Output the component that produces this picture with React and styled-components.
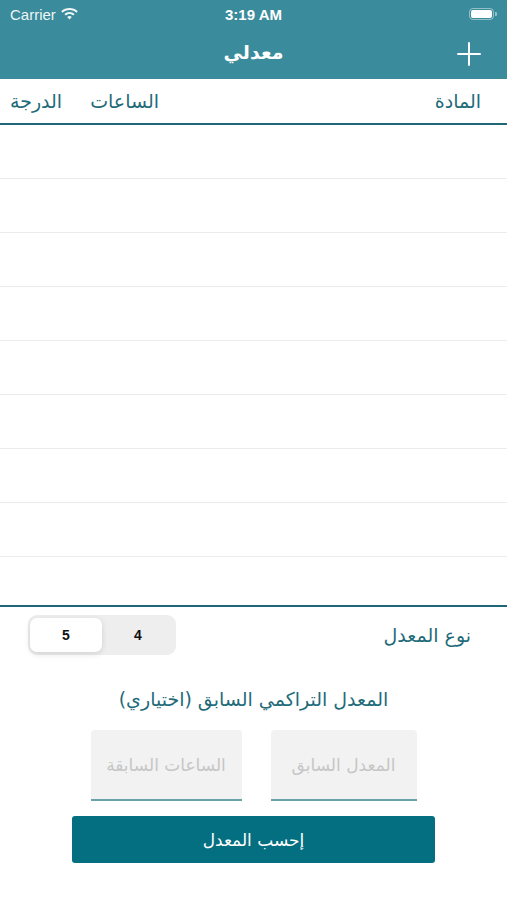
import React, { useState } from 'react';
import styled, { createGlobalStyle } from 'styled-components';

const GlobalStyle = createGlobalStyle`
  html, body {
    margin: 0;
    padding: 0;
    background: #fff;
  }
  body {
    font-family: "DejaVu Sans", "Noto Sans", sans-serif;
  }
  * { box-sizing: border-box; }
`

const Screen = styled.div`
  width: 507px;
  height: 900px;
  display: flex;
  flex-direction: column;
  background: #fff;
  overflow: hidden;
`

const TopBar = styled.div`
  background: #3a8b9b;
  color: #fff;
  display: flex;
  flex-direction: column;
`

const StatusBar = styled.div`
  height: 28px;
  display: grid;
  grid-template-columns: 1fr auto 1fr;
  align-items: center;
  padding: 0 10px;
  font-family: "Liberation Sans", "DejaVu Sans", sans-serif;
  font-size: 15px;
`

const Carrier = styled.div`
  display: flex;
  align-items: center;
  gap: 5px;
  opacity: 0.92;
`

const Clock = styled.div`
  font-weight: 700;
  font-size: 15px;
`

const Battery = styled.div`
  justify-self: end;
  display: flex;
  align-items: center;
  gap: 1px;
`

const BatteryBody = styled.div`
  width: 25px;
  height: 12px;
  border: 1px solid rgba(255, 255, 255, 0.45);
  border-radius: 4px;
  padding: 1px;
  &::after {
    content: '';
    display: block;
    height: 100%;
    background: #fff;
    border-radius: 2px;
  }
`

const BatteryTip = styled.div`
  width: 2px;
  height: 4px;
  background: rgba(255, 255, 255, 0.45);
  border-radius: 0 1px 1px 0;
`

const NavBar = styled.div`
  height: 51px;
  display: grid;
  grid-template-columns: 60px 1fr 60px;
  align-items: center;
`

const NavTitle = styled.div`
  grid-column: 2;
  text-align: center;
  font-size: 19px;
  font-weight: 700;
  padding-bottom: 4px;
`

const AddButton = styled.button`
  grid-column: 3;
  justify-self: end;
  margin-right: 26px;
  background: none;
  border: none;
  padding: 0;
  display: flex;
  color: #fff;
`

const HeaderRow = styled.div`
  height: 46px;
  display: flex;
  direction: rtl;
  align-items: center;
  padding: 0 26px 0 10px;
  border-bottom: 2px solid #1f6676;
  color: #1f6b7a;
  font-size: 19px;
`

const HeaderCell = styled.div`
  flex: ${p => (p.$grow ? 1 : 'none')};
  margin-left: ${p => p.$gap || 0}px;
`

const List = styled.div`
  height: 482px;
  overflow: hidden;
  border-bottom: 2px solid #1f6676;
`

const Row = styled.div`
  height: 54px;
  border-bottom: 1px solid #ececec;
`

const TypeRow = styled.div`
  display: flex;
  direction: rtl;
  align-items: center;
  justify-content: space-between;
  padding: 8px 36px 0 28px;
  height: 48px;
`

const Label = styled.div`
  color: #1f6b7a;
  font-size: 19px;
`

const Segmented = styled.div`
  direction: ltr;
  width: 148px;
  height: 40px;
  padding: 3px 2px;
  background: #eeeeee;
  border-radius: 9px;
  display: flex;
`

const Segment = styled.button`
  flex: 1;
  border: none;
  border-radius: 7px;
  font-family: "Liberation Sans", sans-serif;
  font-weight: 700;
  font-size: 14px;
  color: #111;
  background: ${p => (p.$active ? '#fff' : 'transparent')};
  box-shadow: ${p => (p.$active ? '0 2px 6px rgba(0,0,0,0.12)' : 'none')};
`

const Subtitle = styled.div`
  direction: rtl;
  text-align: center;
  color: #1f6b7a;
  font-size: 19px;
  margin-top: 33px;
`

const Inputs = styled.div`
  display: flex;
  direction: rtl;
  justify-content: center;
  gap: 29px;
  margin-top: 20px;
`

const Field = styled.input`
  width: ${p => p.$w}px;
  height: 71px;
  border: none;
  border-bottom: 2px solid #6aa2ab;
  border-radius: 4px 4px 0 0;
  background: #f2f2f2;
  text-align: center;
  direction: rtl;
  font-family: "DejaVu Sans", sans-serif;
  font-size: 17px;
  outline: none;
  &::placeholder {
    color: #c6c6c6;
  }
`

const CalcButton = styled.button`
  align-self: center;
  margin-top: 15px;
  width: 363px;
  height: 47px;
  border: none;
  border-radius: 3px;
  background: #036f81;
  color: #fff;
  font-family: "DejaVu Sans", sans-serif;
  font-size: 17px;
  direction: rtl;
`

const WifiIcon = () => (
  <svg width="17" height="12" viewBox="0 0 17 12" fill="#fff">
    <path d="M8.5 0C5.3 0 2.4 1.2 0.2 3.2l1.4 1.5C3.4 3 5.8 2 8.5 2s5.1 1 6.9 2.7l1.4-1.5C14.6 1.2 11.7 0 8.5 0z" />
    <path d="M8.5 4c-2 0-3.8 0.8-5.1 2l1.4 1.5c1-0.9 2.3-1.5 3.7-1.5s2.7 0.6 3.7 1.5L13.6 6C12.3 4.8 10.5 4 8.5 4z" />
    <path d="M8.5 8c-0.9 0-1.7 0.3-2.3 0.9L8.5 11.5l2.3-2.6C10.2 8.3 9.4 8 8.5 8z" />
  </svg>
)

const PlusIcon = () => (
  <svg width="24" height="24" viewBox="0 0 24 24" stroke="#fff" strokeWidth="2" strokeLinecap="round">
    <path d="M12 1v22M1 12h22" />
  </svg>
)

export default function App() {
  const [scale, setScale] = useState(5);
  const rows = Array.from({ length: 9 });

  return (
    <>
      <GlobalStyle />
      <Screen>
        <TopBar>
          <StatusBar>
            <Carrier>Carrier <WifiIcon /></Carrier>
            <Clock>3:19 AM</Clock>
            <Battery><BatteryBody /><BatteryTip /></Battery>
          </StatusBar>
          <NavBar>
            <NavTitle>معدلي</NavTitle>
            <AddButton aria-label="add"><PlusIcon /></AddButton>
          </NavBar>
        </TopBar>

        <HeaderRow>
          <HeaderCell $grow>المادة</HeaderCell>
          <HeaderCell $gap={28}>الساعات</HeaderCell>
          <HeaderCell>الدرجة</HeaderCell>
        </HeaderRow>

        <List>
          {rows.map((_, i) => <Row key={i} />)}
        </List>

        <TypeRow>
          <Label>نوع المعدل</Label>
          <Segmented>
            <Segment $active={scale === 5} onClick={() => setScale(5)}>5</Segment>
            <Segment $active={scale === 4} onClick={() => setScale(4)}>4</Segment>
          </Segmented>
        </TypeRow>

        <Subtitle>المعدل التراكمي السابق (اختياري)</Subtitle>

        <Inputs>
          <Field $w={146} placeholder="المعدل السابق" />
          <Field $w={151} placeholder="الساعات السابقة" />
        </Inputs>

        <CalcButton>إحسب المعدل</CalcButton>
      </Screen>
    </>
  );
}
